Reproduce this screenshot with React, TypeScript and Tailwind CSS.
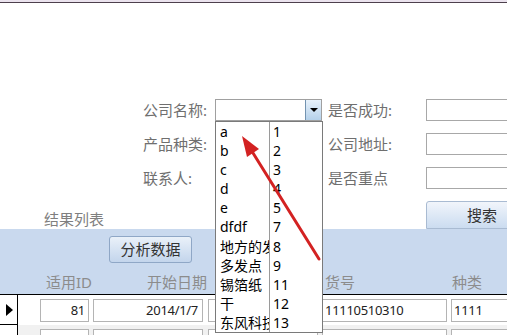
const leftItems = ["a", "b", "c", "d", "e", "dfdf", "地方的发", "多发点", "锡箔纸", "干", "东风科技"];
const rightItems = ["1", "2", "3", "4", "5", "7", "8", "9", "11", "12", "13"];

interface ResultRow {
  id: number;
  start: string;
  name: string;
  code: string;
  kind: string;
}

const rows: ResultRow[] = [
  { id: 81, start: "2014/1/7", name: "", code: "11110510310", kind: "1111" },
  { id: 85, start: "2014/1/16", name: "", code: "11110510215", kind: "1111" },
];

const FormLabel = ({ text, w }: { text: string; w: string }) => (
  <div className={`${w} shrink-0 text-[15px] leading-[22px] text-[#6f6f6f]`}>{text}</div>
);

const TextBox = () => <div className="h-[22px] w-[100px] shrink-0 border border-[#a8a8a8] bg-white" />;

const App = () => {
  return (
    <div className="relative h-[335px] w-[507px] overflow-hidden bg-white font-['Noto_Sans','Noto_Sans_CJK_SC',sans-serif]">
      <div className="h-[2px] bg-[#ebe3ee]" />
      <div className="h-px bg-[#4d404d]" />

      {/* search form */}
      <div className="ml-[143px] mt-[96px] flex flex-col gap-[12px]">
        <div className="flex items-center">
          <FormLabel text="公司名称:" w="w-[72px]" />
          <div className="flex h-[22px] w-[107px] shrink-0 border border-[#a0a0a0] bg-white">
            <div className="flex-1" />
            <div className="flex w-[16px] items-center justify-center border-l border-[#7393b0] bg-gradient-to-b from-[#e8f2fb] to-[#b5d1ea]">
              <div className="h-0 w-0 border-x-[4px] border-t-[4px] border-x-transparent border-t-black" />
            </div>
          </div>
          <div className="w-[6px] shrink-0" />
          <FormLabel text="是否成功:" w="w-[98px]" />
          <TextBox />
        </div>
        <div className="flex items-center">
          <FormLabel text="产品种类:" w="w-[72px]" />
          <div className="h-[22px] w-[107px] shrink-0" />
          <div className="w-[6px] shrink-0" />
          <FormLabel text="公司地址:" w="w-[98px]" />
          <TextBox />
        </div>
        <div className="flex items-center">
          <FormLabel text="联系人:" w="w-[72px]" />
          <div className="h-[22px] w-[107px] shrink-0" />
          <div className="w-[6px] shrink-0" />
          <FormLabel text="是否重点" w="w-[98px]" />
          <TextBox />
        </div>
      </div>

      <div className="mt-[12px] flex items-end">
        <div className="ml-[44px] w-[382px] shrink-0 pb-[1px] text-[15px] leading-[18px] text-[#7f7f7f]">结果列表</div>
        <div className="flex h-[28px] w-[100px] shrink-0 items-center rounded-t-[3px] border border-[#a9bbd2] bg-gradient-to-b from-[#f1f5fb] to-[#cbdcf0] pl-[40px] text-[15px] text-[#333]">
          搜索
        </div>
      </div>

      {/* result list */}
      <div className="h-[65px] bg-[#c9d9ee] pt-[7px]">
        <div className="ml-[109px] flex h-[27px] w-[83px] items-center justify-center rounded-[3px] border border-[#8fa7c6] bg-gradient-to-b from-[#eaf1f9] to-[#c3d5ec] text-[15px] text-[#333]">
          分析数据
        </div>
        <div className="mt-[9px] flex text-[15px] leading-[20px] text-[#8c8c8c]">
          <div className="ml-[46px] w-[101px]">适用ID</div>
          <div className="w-[178px]">开始日期</div>
          <div className="w-[127px]">货号</div>
          <div>种类</div>
        </div>
      </div>

      <div className="border-t border-black">
        {rows.map((row, i) => (
          <div key={row.id} className={`flex h-[30px] ${i % 2 ? "bg-[#f1f1f1]" : "bg-white"}`}>
            <div className="flex w-[18px] shrink-0 items-center border-r border-b border-black bg-white pl-[6px]">
              {i === 0 && (
                <div className="h-0 w-0 border-y-[6px] border-l-[7px] border-y-transparent border-l-black" />
              )}
            </div>
            <div className="flex items-start pt-[4px] text-[13px] leading-[21px] tracking-[-0.3px] text-[#222]">
              <div className="ml-[22px] h-[23px] w-[49px] border border-[#b4b4b4] bg-white pr-[3px] text-right">{row.id}</div>
              <div className="ml-[4px] h-[23px] w-[110px] border border-[#b4b4b4] bg-white pr-[4px] text-right">{row.start}</div>
              <div className="ml-[5px] h-[23px] w-[110px] border border-[#b4b4b4] bg-white">{row.name}</div>
              <div className="ml-[4px] h-[23px] w-[125px] border border-[#b4b4b4] bg-white pl-[2px]">{row.code}</div>
              <div className="ml-[4px] h-[23px] w-[70px] border border-[#b4b4b4] bg-white pl-[2px]">{row.kind}</div>
            </div>
          </div>
        ))}
      </div>

      {/* open dropdown list */}
      <div className="absolute left-[215px] top-[121px] flex h-[212px] w-[108px] border border-[#7a7a7a] bg-white text-[14px] text-black">
        <div className="w-[54px] shrink-0 overflow-hidden border-r border-[#9a9a9a] pl-[4px]">
          {leftItems.map((t) => (
            <div key={t} className="h-[19.1px] overflow-hidden whitespace-nowrap leading-[19px]">{t}</div>
          ))}
        </div>
        <div className="flex-1 pl-[3px]">
          {rightItems.map((t) => (
            <div key={t} className="h-[19.1px] leading-[19px]">{t}</div>
          ))}
        </div>
      </div>

      {/* red annotation arrow */}
      <svg className="pointer-events-none absolute left-0 top-0" width="507" height="335">
        <line x1="319" y1="259" x2="253" y2="153" stroke="#d32222" strokeWidth="3" strokeLinecap="round" />
        <polygon points="242,136 259,149 247,157" fill="#d32222" />
      </svg>
    </div>
  );
};

export default App;
